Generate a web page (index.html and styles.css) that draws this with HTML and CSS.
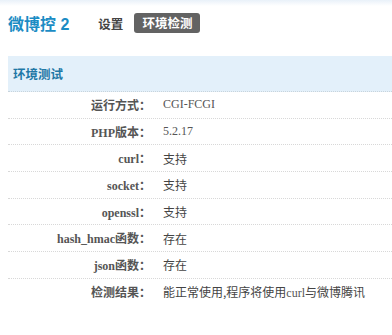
FILE: index.html
```html
<!DOCTYPE html>
<html lang="zh-CN">
<head>
<meta charset="utf-8">
<title>微博控 2 - 环境检测</title>
<link rel="stylesheet" href="styles.css">
</head>
<body>
<div class="topbar"></div>
<header class="nav">
  <span class="brand">微博控 2</span>
  <a class="nav-link">设置</a>
  <a class="nav-tab">环境检测</a>
</header>
<section class="panel">
  <h2 class="panel-title">环境测试</h2>
  <div class="row"><span class="label">运行方式：</span><span class="value latin">CGI-FCGI</span></div>
  <div class="row"><span class="label">PHP版本：</span><span class="value latin">5.2.17</span></div>
  <div class="row"><span class="label">curl：</span><span class="value">支持</span></div>
  <div class="row"><span class="label">socket：</span><span class="value">支持</span></div>
  <div class="row"><span class="label">openssl：</span><span class="value">支持</span></div>
  <div class="row"><span class="label">hash_hmac函数：</span><span class="value">存在</span></div>
  <div class="row"><span class="label">json函数：</span><span class="value">存在</span></div>
  <div class="row last"><span class="label">检测结果：</span><span class="value">能正常使用,程序将使用<span class="latin">curl</span>与微博腾讯</span></div>
</section>
</body>
</html>
```

FILE: styles.css
```css
html, body {
  margin: 0;
  padding: 0;
  background: #fff;
}
body {
  font-family: "Liberation Serif", "Noto Sans CJK SC", serif;
  font-size: 12px;
  color: #444;
  overflow: hidden;
}
.topbar {
  height: 6px;
  background: linear-gradient(#e9f1f9, #ffffff);
}
.nav {
  display: flex;
  align-items: center;
  height: 20px;
  margin-top: 7px;
  padding-left: 8px;
}
.brand {
  font-family: "Liberation Sans", "Noto Sans CJK SC", sans-serif;
  font-size: 16px;
  font-weight: bold;
  color: #1b8cc4;
  margin-right: 29px;
  white-space: pre;
}
.nav-link {
  font-family: "Noto Sans CJK SC", sans-serif;
  font-size: 12.5px;
  font-weight: bold;
  color: #444;
  margin-right: 11px;
}
.nav-tab {
  font-family: "Noto Sans CJK SC", sans-serif;
  font-size: 12.5px;
  font-weight: bold;
  color: #fff;
  background: #636363;
  border-radius: 3px;
  height: 20px;
  line-height: 20px;
  padding: 0 8px;
}
.panel {
  margin: 23px 0 0 8px;
}
.panel-title {
  margin: 0;
  height: 35px;
  line-height: 35px;
  padding-left: 5px;
  background: #e3f0fa;
  font-family: "Noto Sans CJK SC", sans-serif;
  font-size: 12.5px;
  font-weight: bold;
  color: #1f78a6;
  border-bottom: 1px dotted #c8d4dc;
}
.row {
  display: flex;
  align-items: center;
  height: 25.7px;
  border-bottom: 1px dotted #d8d8d8;
}
.row.last {
  border-bottom: none;
}
.label {
  width: 143px;
  text-align: right;
  font-family: "Liberation Serif", "Noto Sans CJK JP", serif;
  font-weight: bold;
  color: #555;
  white-space: nowrap;
}
.value {
  padding-left: 12px;
  font-family: "Noto Sans CJK SC", sans-serif;
  color: #444;
  white-space: nowrap;
}
.latin {
  font-family: "Liberation Serif", serif;
  color: #555;
}
```
